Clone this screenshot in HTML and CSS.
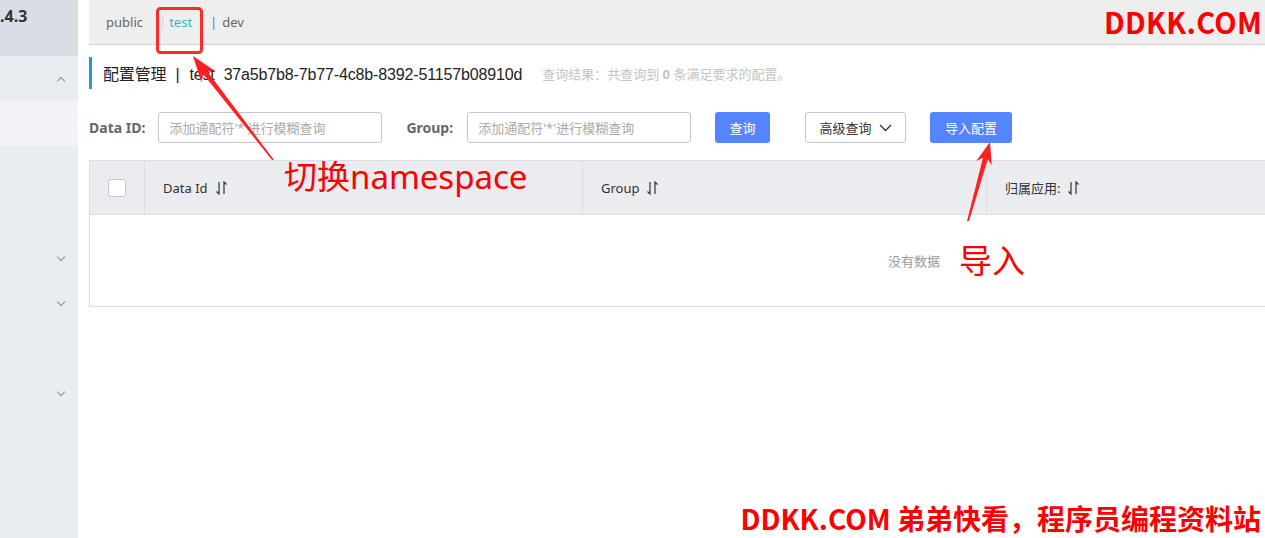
FILE: index.html
```html
<!DOCTYPE html>
<html lang="zh-CN">
<head>
    <meta charset="UTF-8">
    <meta name="viewport" content="width=device-width, initial-scale=1.0">
    <title>配置管理</title>
    <link rel="stylesheet" href="styles.css">
</head>
<body>
    <div class="page">
        <!-- Sidebar -->
        <div class="sidebar">
            <div class="side-top"><span class="version">.4.3</span></div>
            <div class="side-group"><span class="chev up"></span></div>
            <div class="side-item active"></div>
            <div class="side-item"></div>
            <div class="side-item"></div>
            <div class="side-group"><span class="chev"></span></div>
            <div class="side-group"><span class="chev"></span></div>
            <div class="side-item"></div>
            <div class="side-group"><span class="chev"></span></div>
        </div>

        <!-- Main -->
        <div class="main">
            <div class="ns-bar">
                <span class="ns-link">public</span>
                <span class="ns-sep light">|</span>
                <span class="ns-link current">test</span>
                <span class="ns-sep">|</span>
                <span class="ns-link">dev</span>
                <span class="brand">DDKK.COM</span>
            </div>

            <div class="page-title">
                <span class="title-text">配置管理<span class="title-sep">|</span>test<span class="title-id">37a5b7b8-7b77-4c8b-8392-51157b08910d</span></span>
                <span class="title-hint">查询结果：共查询到 <b>0</b> 条满足要求的配置。</span>
            </div>

            <div class="filters">
                <label class="filter-label">Data ID:</label>
                <input class="filter-input" type="text" placeholder="添加通配符'*'进行模糊查询">
                <label class="filter-label group-label">Group:</label>
                <input class="filter-input" type="text" placeholder="添加通配符'*'进行模糊查询">
                <button class="btn btn-primary btn-search">查询</button>
                <button class="btn btn-normal btn-advanced">高级查询
                    <svg width="13" height="8" viewBox="0 0 13 8"><path d="M1 1 L6.5 6.5 L12 1" fill="none" stroke="#333" stroke-width="1.3"/></svg>
                </button>
                <button class="btn btn-primary btn-import">导入配置</button>
            </div>

            <div class="table">
                <div class="table-head">
                    <div class="cell cell-check"><span class="checkbox"></span></div>
                    <div class="cell cell-id">Data Id
                        <svg class="sort" width="11" height="14" viewBox="0 0 11 14"><path d="M3 1 V13 L0.5 10.5 M8 13 V1 L10.5 3.5" fill="none" stroke="#333" stroke-width="1.2"/></svg>
                    </div>
                    <div class="cell cell-group">Group
                        <svg class="sort" width="11" height="14" viewBox="0 0 11 14"><path d="M3 1 V13 L0.5 10.5 M8 13 V1 L10.5 3.5" fill="none" stroke="#333" stroke-width="1.2"/></svg>
                    </div>
                    <div class="cell cell-app">归属应用:
                        <svg class="sort" width="11" height="14" viewBox="0 0 11 14"><path d="M3 1 V13 L0.5 10.5 M8 13 V1 L10.5 3.5" fill="none" stroke="#333" stroke-width="1.2"/></svg>
                    </div>
                </div>
                <div class="table-body">
                    <span class="empty">没有数据</span>
                </div>
            </div>
        </div>

        <!-- Annotations -->
        <svg class="marks" width="1265" height="538" viewBox="0 0 1265 538">
            <rect x="157.5" y="8.5" width="44" height="44" rx="3" fill="none" stroke="#ff2a2a" stroke-width="3"/>
            <polygon points="193,56 215.5,71.2 207.3,71.3 274,160 272,160 203.3,74.3 201.3,82.3" fill="#ff2020"/>
            <polygon points="990,142 991.7,165.4 987.8,159.1 969,221 967,221 983,157.7 976.3,161" fill="#ff2020"/>
        </svg>
        <span class="note note-ns">切换namespace</span>
        <span class="note note-import">导入</span>
        <span class="footer-mark">DDKK.COM 弟弟快看，程序员编程资料站</span>
    </div>
</body>
</html>
```

FILE: styles.css
```css
:root {
    --primary: #5584ff;
    --side-bg: #e9ecf0;
    --border: #dcdee3;
    --text: #333333;
    --muted: #999999;
    --mark-red: #ff0000;
}

body {
    margin: 0;
    padding: 0;
    background: #ffffff;
    color: var(--text);
    font-family: "Noto Sans", "Noto Sans CJK SC", sans-serif;
    overflow: hidden;
}

.page {
    position: relative;
    display: flex;
    width: 1265px;
    height: 538px;
    overflow: hidden;
}

/* Sidebar */
.sidebar {
    width: 78px;
    flex-shrink: 0;
    background: var(--side-bg);
    overflow: hidden;
}

.side-top {
    height: 56px;
    background: #dadee4;
}

.version {
    display: block;
    padding-top: 5px;
    font-size: 16px;
    font-weight: 700;
    color: #333;
}

.side-group,
.side-item {
    height: 45px;
    position: relative;
}

.side-item.active {
    background: #f2f3f6;
}

.chev {
    position: absolute;
    left: 58px;
    top: 18px;
    width: 5px;
    height: 5px;
    border-right: 1px solid #8790a0;
    border-bottom: 1px solid #8790a0;
    transform: rotate(45deg);
}

.chev.up {
    top: 22px;
    transform: rotate(225deg);
}

/* Main */
.main {
    flex: 1;
    margin-left: 11px;
    min-width: 0;
}

.ns-bar {
    display: flex;
    align-items: center;
    height: 44px;
    background: #eeeeee;
    border-bottom: 1px solid #d1d1d1;
    padding-left: 17px;
    font-size: 13px;
    color: #666;
}

.ns-link.current {
    color: #2fb6dd;
    margin: 0 18px 0 0;
}

.ns-sep {
    color: #2f8fd0;
    margin-right: 5px;
}

.ns-sep.light {
    color: #c9d6e0;
    margin-left: 16px;
    margin-right: 3px;
}

.brand {
    margin-left: auto;
    margin-right: 3px;
    margin-top: -3px;
    font-family: "Noto Sans CJK SC", "Noto Sans", sans-serif;
    font-size: 29px;
    font-weight: 700;
    color: var(--mark-red);
    letter-spacing: 0.3px;
}

.page-title {
    display: flex;
    align-items: center;
    height: 32px;
    margin-top: 12px;
    border-left: 3px solid #1f9bd6;
    padding-left: 11px;
}

.title-text {
    font-family: "Liberation Sans", "Noto Sans CJK SC", sans-serif;
    font-size: 16px;
    letter-spacing: -0.15px;
    color: #222;
}

.title-sep {
    margin: 0 10px 0 9px;
}

.title-id {
    margin-left: 9px;
}

.title-hint {
    margin-left: 20px;
    font-size: 13px;
    color: #c4c4c4;
}

.filters {
    display: flex;
    align-items: center;
    margin-top: 23px;
    height: 31px;
}

.filter-label {
    font-size: 14px;
    font-weight: 700;
    color: #666;
    margin-right: 13px;
}

.group-label {
    margin-left: 24px;
    margin-right: 14px;
}

.filter-input {
    box-sizing: border-box;
    width: 224px;
    height: 31px;
    padding: 0 10px;
    border: 1px solid #c4c6cf;
    border-radius: 3px;
    font-family: "Noto Sans", "Noto Sans CJK SC", sans-serif;
    font-size: 13px;
    outline: none;
}

.filter-input::placeholder {
    color: #aaaaaa;
}

.btn {
    box-sizing: border-box;
    height: 31px;
    border-radius: 3px;
    font-family: "Noto Sans", "Noto Sans CJK SC", sans-serif;
    font-size: 13px;
    cursor: pointer;
    display: flex;
    align-items: center;
    justify-content: center;
    gap: 7px;
}

.btn-primary {
    background: var(--primary);
    border: none;
    color: #fff;
}

.btn-normal {
    background: #fff;
    border: 1px solid #c4c6cf;
    color: #333;
}

.btn-search {
    width: 55px;
    margin-left: 24px;
}

.btn-advanced {
    width: 101px;
    margin-left: 35px;
}

.btn-import {
    width: 82px;
    margin-left: 24px;
}

/* Table */
.table {
    margin-top: 17px;
    width: 1190px;
    border: 1px solid var(--border);
}

.table-head {
    display: flex;
    height: 53px;
    background: #ebecf0;
    border-bottom: 1px solid var(--border);
    font-size: 13px;
    color: #333;
}

.cell {
    display: flex;
    align-items: center;
    gap: 8px;
    padding-left: 18px;
    border-right: 1px solid var(--border);
}

.cell-check {
    width: 55px;
    box-sizing: border-box;
    padding-left: 18px;
}

.cell-id {
    width: 419px;
}

.cell-group {
    width: 385px;
}

.cell-app {
    flex: 1;
    border-right: none;
}

.checkbox {
    width: 16px;
    height: 16px;
    background: #fff;
    border: 1px solid #c4c6cf;
    border-radius: 3px;
}

.table-body {
    height: 91px;
    display: flex;
    align-items: center;
    padding-left: 798px;
}

.empty {
    font-size: 13px;
    color: #999;
}

/* Annotations */
.marks {
    position: absolute;
    left: 0;
    top: 0;
    pointer-events: none;
}

.note {
    position: absolute;
    color: var(--mark-red);
    font-family: "Noto Sans", "Noto Sans CJK SC", sans-serif;
    font-size: 33px;
    line-height: 1;
    white-space: nowrap;
}

.note-ns {
    left: 284px;
    top: 160px;
}

.note-import {
    left: 959px;
    top: 244px;
}

.footer-mark {
    position: absolute;
    right: 4px;
    bottom: 2px;
    font-family: "Noto Sans CJK SC", "Noto Sans", sans-serif;
    font-size: 28px;
    line-height: 1.2;
    font-weight: 700;
    color: var(--mark-red);
    white-space: nowrap;
}
```
